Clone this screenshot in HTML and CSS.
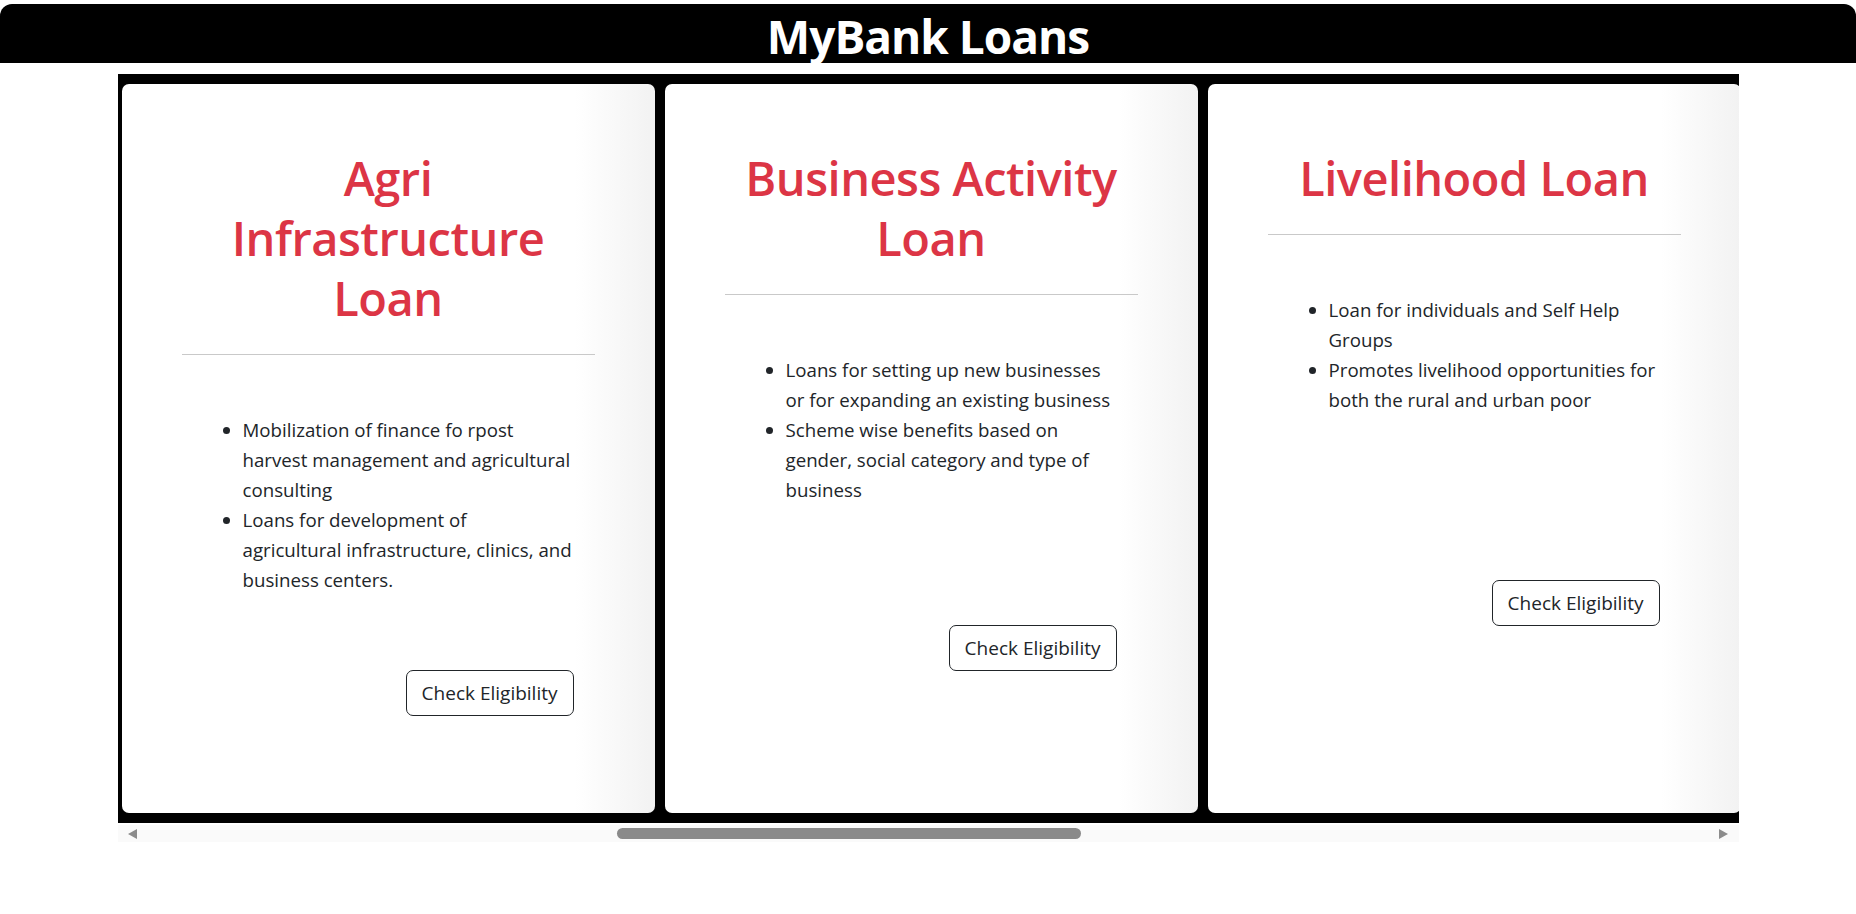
FILE: index.html
```html
<!DOCTYPE html>
<html lang="en">
<head>
<meta charset="utf-8">
<title>MyBank Loans</title>
<link rel="stylesheet" href="styles.css">
</head>
<body>
<header class="site-header">
  <h1 class="site-title">MyBank Loans</h1>
</header>
<main class="loans">
  <div class="scroller">
    <article class="card">
      <h1 class="card-title">Agri Infrastructure Loan</h1>
      <hr class="card-rule">
      <ul class="card-list">
        <li>Mobilization of finance fo rpost harvest management and agricultural consulting</li>
        <li>Loans for development of agricultural&nbsp;infrastructure, clinics, and business centers.</li>
      </ul>
      <div class="card-actions gap-short"><button class="btn">Check Eligibility</button></div>
    </article>
    <article class="card">
      <h1 class="card-title">Business Activity Loan</h1>
      <hr class="card-rule">
      <ul class="card-list">
        <li>Loans for setting up new businesses or for expanding an existing business</li>
        <li>Scheme wise benefits based on gender, social category and type of business</li>
      </ul>
      <div class="card-actions gap-mid"><button class="btn">Check Eligibility</button></div>
    </article>
    <article class="card">
      <h1 class="card-title">Livelihood Loan</h1>
      <hr class="card-rule">
      <ul class="card-list">
        <li>Loan for individuals and Self Help Groups</li>
        <li>Promotes livelihood opportunities for both the rural and urban poor</li>
      </ul>
      <div class="card-actions gap-long"><button class="btn">Check Eligibility</button></div>
    </article>
  </div>
  <div class="scrollbar">
    <div class="sb-btn"><span class="arrow arrow-left"></span></div>
    <div class="sb-track"><div class="sb-thumb"></div></div>
    <div class="sb-btn"><span class="arrow arrow-right"></span></div>
  </div>
</main>
</body>
</html>
```
FILE: styles.css
```css
* { box-sizing: border-box; }
html, body { margin: 0; padding: 0; background: #fff; }
body {
  font-family: "Open Sans", "Noto Sans", "Liberation Sans", sans-serif;
  color: #212529;
  font-size: 18.7px;
  line-height: 30px;
}
.site-header {
  margin-top: 4px;
  height: 59px;
  padding-top: 5px;
  background: #000;
  border-radius: 12px 12px 0 0;
  display: flex;
  justify-content: center;
  align-items: center;
}
.site-title {
  margin: 0;
  color: #fff;
  font-size: 46px;
  font-weight: 700;
  line-height: 54px;
  letter-spacing: -1px;
}
.loans {
  width: 1621px;
  margin: 11px auto 0;
}
.scroller {
  background: #000;
  display: flex;
  gap: 10px;
  padding: 10px 0 10px 4px;
  overflow: hidden;
}
.card {
  flex: 0 0 533px;
  height: 729px;
  border-radius: 7px;
  background: linear-gradient(to right, #fff calc(100% - 80px), #f2f2f2 100%);
  padding: 64px 60px 0;
}
.card-title {
  margin: 0 0 26px;
  padding: 0 10px;
  font-size: 47px;
  font-weight: 600;
  line-height: 60px;
  text-align: center;
  color: #dc3545;
  letter-spacing: -0.5px;
}
.card-rule {
  margin: 0;
  border: 0;
  border-top: 1px solid #c9c9c9;
}
.card-list {
  margin: 60px 21px 0;
  padding-left: 40px;
}
.card-actions {
  display: flex;
  justify-content: flex-end;
  padding-right: 21px;
}
.gap-short { margin-top: 75px; }
.gap-mid { margin-top: 120px; }
.gap-long { margin-top: 165px; }
.btn {
  font: inherit;
  font-size: 19px;
  color: #212529;
  background: transparent;
  border: 1px solid #212529;
  border-radius: 7px;
  height: 46px;
  padding: 0 15px;
}
.scrollbar {
  display: flex;
  height: 17px;
  margin-top: 2px;
  background: #fafafa;
}
.sb-btn {
  flex: 0 0 30px;
  display: flex;
  align-items: center;
  justify-content: center;
}
.arrow {
  width: 0;
  height: 0;
  border-top: 5.5px solid transparent;
  border-bottom: 5.5px solid transparent;
}
.arrow-left { border-right: 9px solid #8c8c8c; }
.arrow-right { border-left: 9px solid #8c8c8c; }
.sb-track {
  flex: 1;
  display: flex;
  align-items: center;
}
.sb-thumb {
  margin-left: 469px;
  width: 464px;
  height: 11px;
  border-radius: 6px;
  background: #8a8a8a;
}
```
